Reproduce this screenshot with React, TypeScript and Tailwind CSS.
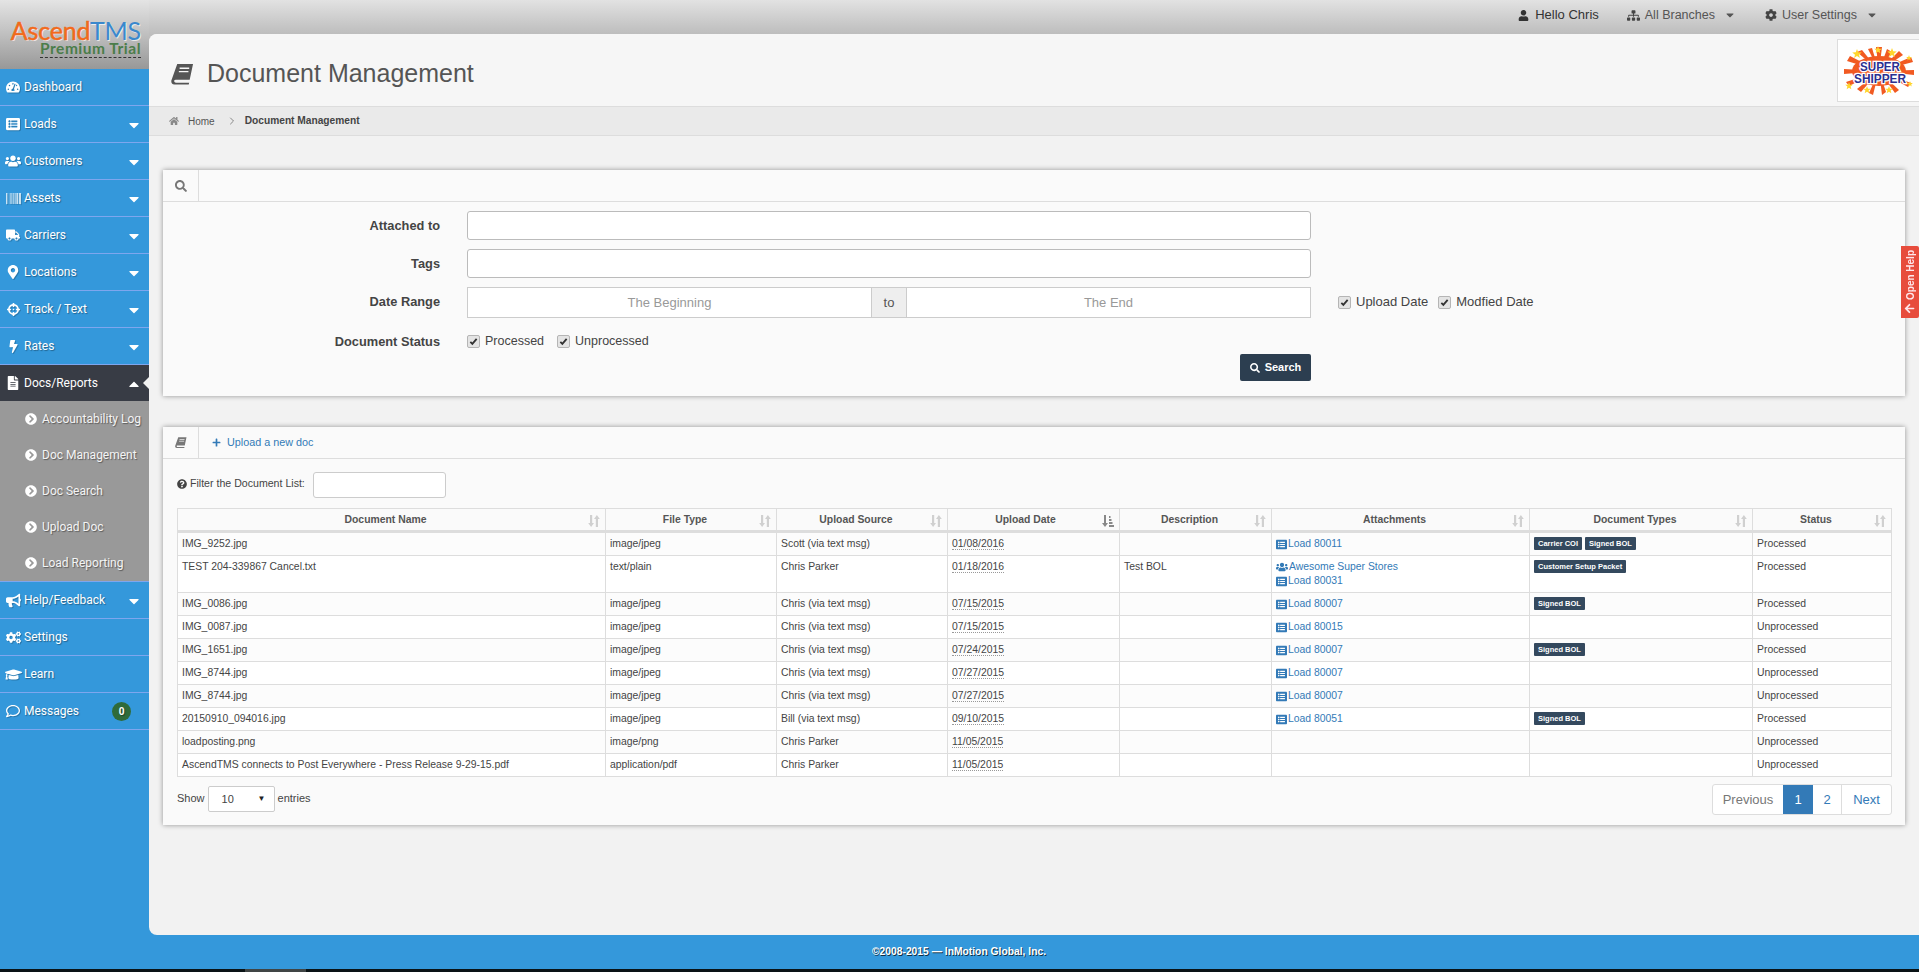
import type { ReactNode } from "react";
import { ChevronRight } from "lucide-react";
import {
  FaBarcode,
  FaBolt,
  FaBullhorn,
  FaCaretDown,
  FaCaretUp,
  FaChevronCircleRight,
  FaCog,
  FaCogs,
  FaCrosshairs,
  FaFileAlt,
  FaGraduationCap,
  FaHome,
  FaListAlt,
  FaMapMarkerAlt,
  FaPlus,
  FaQuestionCircle,
  FaRegComment,
  FaSearch,
  FaSitemap,
  FaTachometerAlt,
  FaTruck,
  FaUser,
  FaUsers,
  FaArrowUp,
} from "react-icons/fa";

const navTop = [
  { label: "Dashboard", icon: <FaTachometerAlt size={14} /> },
  { label: "Loads", icon: <FaListAlt size={14} />, caret: true },
  { label: "Customers", icon: <FaUsers size={16} />, caret: true },
  { label: "Assets", icon: <FaBarcode size={15} />, caret: true },
  { label: "Carriers", icon: <FaTruck size={14} />, caret: true },
  { label: "Locations", icon: <FaMapMarkerAlt size={14} />, caret: true },
  { label: "Track / Text", icon: <FaCrosshairs size={13} />, caret: true },
  { label: "Rates", icon: <FaBolt size={13} />, caret: true },
];

const navSub = ["Accountability Log", "Doc Management", "Doc Search", "Upload Doc", "Load Reporting"];

const navBottom = [
  { label: "Help/Feedback", icon: <FaBullhorn size={15} />, caret: true },
  { label: "Settings", icon: <FaCogs size={15} /> },
  { label: "Learn", icon: <FaGraduationCap size={17} /> },
  { label: "Messages", icon: <FaRegComment size={14} />, badge: "0" },
];

type Row = {
  name: string;
  type: string;
  source: string;
  date: string;
  desc?: string;
  links?: { text: string; customer?: boolean }[];
  tags?: string[];
  status: string;
};

const rows: Row[] = [
  { name: "IMG_9252.jpg", type: "image/jpeg", source: "Scott (via text msg)", date: "01/08/2016", links: [{ text: "Load 80011" }], tags: ["Carrier COI", "Signed BOL"], status: "Processed" },
  { name: "TEST 204-339867 Cancel.txt", type: "text/plain", source: "Chris Parker", date: "01/18/2016", desc: "Test BOL", links: [{ text: "Awesome Super Stores", customer: true }, { text: "Load 80031" }], tags: ["Customer Setup Packet"], status: "Processed" },
  { name: "IMG_0086.jpg", type: "image/jpeg", source: "Chris (via text msg)", date: "07/15/2015", links: [{ text: "Load 80007" }], tags: ["Signed BOL"], status: "Processed" },
  { name: "IMG_0087.jpg", type: "image/jpeg", source: "Chris (via text msg)", date: "07/15/2015", links: [{ text: "Load 80015" }], status: "Unprocessed" },
  { name: "IMG_1651.jpg", type: "image/jpeg", source: "Chris (via text msg)", date: "07/24/2015", links: [{ text: "Load 80007" }], tags: ["Signed BOL"], status: "Processed" },
  { name: "IMG_8744.jpg", type: "image/jpeg", source: "Chris (via text msg)", date: "07/27/2015", links: [{ text: "Load 80007" }], status: "Unprocessed" },
  { name: "IMG_8744.jpg", type: "image/jpeg", source: "Chris (via text msg)", date: "07/27/2015", links: [{ text: "Load 80007" }], status: "Unprocessed" },
  { name: "20150910_094016.jpg", type: "image/jpeg", source: "Bill (via text msg)", date: "09/10/2015", links: [{ text: "Load 80051" }], tags: ["Signed BOL"], status: "Processed" },
  { name: "loadposting.png", type: "image/png", source: "Chris Parker", date: "11/05/2015", status: "Unprocessed" },
  { name: "AscendTMS connects to Post Everywhere - Press Release 9-29-15.pdf", type: "application/pdf", source: "Chris Parker", date: "11/05/2015", status: "Unprocessed" },
];

const columns = [
  { label: "Document Name", width: "w-[428px]" },
  { label: "File Type", width: "w-[171px]" },
  { label: "Upload Source", width: "w-[171px]" },
  { label: "Upload Date", width: "w-[172px]", active: true },
  { label: "Description", width: "w-[152px]" },
  { label: "Attachments", width: "w-[258px]" },
  { label: "Document Types", width: "w-[223px]" },
  { label: "Status", width: "w-[139px]" },
];

function BookIcon({ className }: { className: string }) {
  return (
    <svg viewBox="0 0 24 22" className={className} fill="currentColor">
      <path d="M6.5.5H23L19.5 17H5C3.500 17 3 18 3.500 19c.3.7 1 1 2 1H19l-.5 2h-15C1.500 22 0 20.500.3 18Z" />
      <path d="M9 5h10M8.200 8.500h10" stroke="#f6f6f6" strokeWidth="1.400" fill="none" />
    </svg>
  );
}

function SortIcon({ active }: { active?: boolean }) {
  if (active) {
    return (
      <svg viewBox="0 0 12 12" className="h-3 w-3 shrink-0 text-[#888]" fill="currentColor">
        <path d="M2 0h2v8h2L3 12 0 8h2Z" />
        <path d="M7 1h1.500v2H7ZM7 4h2.500v2H7ZM7 7h3.500v2H7ZM7 10h5v2H7Z" />
      </svg>
    );
  }
  return (
    <svg viewBox="0 0 12 12" className="h-3 w-3 shrink-0 text-[#d0d0d0]" fill="currentColor">
      <path d="M2 0h2.200v8H6L3.100 12 .2 8H2Z" />
      <path d="M7.800 12H10V4h1.800L8.900 0 6 4h1.800Z" />
    </svg>
  );
}

function Check({ label }: { label: string }) {
  return (
    <span className="flex items-center gap-[5px]">
      <span className="flex h-[13px] w-[13px] items-center justify-center rounded-[2px] border border-[#b5b5b5] bg-[#e4e4e4]">
        <svg viewBox="0 0 10 10" className="h-[9px] w-[9px]" fill="none" stroke="#333" strokeWidth="2">
          <path d="M1.500 5.500l2.200 2.200L8.500 2" />
        </svg>
      </span>
      {label}
    </span>
  );
}

function NavItem({ label, icon, caret, badge }: { label: string; icon: ReactNode; caret?: boolean; badge?: string }) {
  return (
    <div className="flex h-[37px] items-center border-b border-[#7ea6ee] text-white [text-shadow:1px_1px_1px_rgba(0,0,0,0.35)]">
      <span className="flex w-[24px] shrink-0 justify-center pl-[2px] drop-shadow-[1px_1px_0_rgba(0,0,0,0.2)]">{icon}</span>
      <span className="flex-1 text-[12px]">{label}</span>
      {caret && <FaCaretDown size={16} className="mr-[7px] mt-[2px]" />}
      {badge && (
        <span className="mr-[18px] flex h-[19px] w-[19px] items-center justify-center rounded-full bg-[#2f6b3a] text-[10px] font-bold">
          {badge}
        </span>
      )}
    </div>
  );
}

function Sidebar() {
  return (
    <aside className="flex w-[149px] shrink-0 flex-col bg-[#3498db] font-['Roboto',sans-serif]">
      <div className="flex h-[69px] flex-col items-end justify-end bg-gradient-to-b from-[#e4e4e4] via-[#bfbfbf] to-[#989898] pb-[11px] pr-[8px]">
        <div className="mb-[-3px] text-[25px] leading-[24px] tracking-[-0.2px] font-['Lato',sans-serif] [text-shadow:1px_1px_0_rgba(255,255,255,0.7)]">
          <span className="text-[#f26a1b] [-webkit-text-stroke:0.5px_#f26a1b]">Ascend</span>
          <span className="text-[#3a88cc]">TMS</span>
        </div>
        <div className="border-b border-dashed border-[#333] text-[15.5px] font-bold leading-[18px] tracking-[0.5px] text-[#4b7d4a] font-['Lato',sans-serif]">
          Premium Trial
        </div>
      </div>
      {navTop.map((item) => (
        <NavItem key={item.label} {...item} />
      ))}
      <div className="relative flex h-[36px] items-center bg-[#383c45] text-white">
        <span className="flex w-[24px] shrink-0 justify-center pl-[2px]">
          <FaFileAlt size={14} />
        </span>
        <span className="flex-1 text-[12px]">Docs/Reports</span>
        <FaCaretUp size={16} className="mr-[7px] mt-[2px]" />
        <span className="absolute right-0 top-[12px] h-0 w-0 border-y-[6px] border-r-[6px] border-y-transparent border-r-[#f2f2f2]" />
      </div>
      <div className="bg-[#999999] text-[#f4f4f4] [text-shadow:1px_1px_1px_rgba(0,0,0,0.4)]">
        {navSub.map((label) => (
          <div key={label} className="flex h-[36px] items-center gap-[5px] pl-[25px] text-[12px]">
            <FaChevronCircleRight size={12} className="shrink-0 text-white" />
            <span className="whitespace-nowrap">{label}</span>
          </div>
        ))}
      </div>
      <div className="border-t border-[#7ea6ee]">
        {navBottom.map((item) => (
          <NavItem key={item.label} {...item} />
        ))}
      </div>
    </aside>
  );
}

function TopBar() {
  return (
    <header className="flex h-[34px] items-center justify-end bg-gradient-to-b from-[#e2e2e2] to-[#bdbdbd] pb-[4px] pr-[41px] text-[12.5px] text-[#555]">
      <span className="flex items-center gap-[6px] text-[13px] text-[#333]">
        <FaUser size={11} />
        Hello Chris
      </span>
      <span className="ml-[28px] flex items-center gap-[5px]">
        <FaSitemap size={13} className="text-[#444]" />
        All Branches
        <FaCaretDown size={12} className="ml-[4px]" />
      </span>
      <span className="ml-[29px] flex items-center gap-[5px]">
        <FaCog size={12} className="text-[#444]" />
        User Settings
        <FaCaretDown size={12} className="ml-[4px]" />
      </span>
    </header>
  );
}

// rays and stars of the Super Shipper badge
const rays = [
  "36,25 33,1 39,1",
  "36,25 44,3 49,6",
  "36,25 56,5 60,9",
  "36,25 68,11 70,16",
  "36,25 71,24 71,29",
  "36,25 68,37 65,41",
  "36,25 56,44 52,47",
  "36,25 43,46 39,49",
  "36,25 30,49 26,47",
  "36,25 18,46 14,43",
  "36,25 6,40 3,36",
  "36,25 1,28 1,23",
  "36,25 4,15 7,10",
  "36,25 14,6 19,4",
  "36,25 25,3 29,2",
];

function Star({ x, y, r }: { x: number; y: number; r: number }) {
  const points = Array.from({ length: 10 }, (_, i) => {
    const a = (Math.PI / 5) * i - Math.PI / 2;
    const d = i % 2 === 0 ? r : r * 0.42;
    return `${x + d * Math.cos(a)},${y + d * Math.sin(a)}`;
  }).join(" ");
  return <polygon points={points} fill="#ffd62e" />;
}

function SuperShipper() {
  return (
    <svg viewBox="0 0 72 50" className="h-[50px] w-[72px]">
      {rays.map((p) => (
        <polygon key={p} points={p} fill="#f15a22" />
      ))}
      <ellipse cx="36" cy="25" rx="27" ry="15" fill="#f15a22" />
      <Star x={14} y={8} r={5} />
      <Star x={35} y={4} r={4} />
      <Star x={49} y={7} r={5} />
      <Star x={66} y={12} r={3} />
      <Star x={6} y={40} r={4} />
      <Star x={24} y={44} r={4} />
      <Star x={46} y={44} r={4} />
      <Star x={67} y={38} r={3} />
      <text x="37" y="25" textAnchor="middle" fontSize="13" fontWeight="700" fill="#2b3092" stroke="#fff" strokeWidth="2.500" paintOrder="stroke" fontFamily="'Liberation Sans', sans-serif" textLength="40" lengthAdjust="spacingAndGlyphs">SUPER</text>
      <text x="37" y="37" textAnchor="middle" fontSize="13" fontWeight="700" fill="#2b3092" stroke="#fff" strokeWidth="2.500" paintOrder="stroke" fontFamily="'Liberation Sans', sans-serif" textLength="52" lengthAdjust="spacingAndGlyphs">SHIPPER</text>
    </svg>
  );
}

function PanelHead({ icon, children }: { icon: ReactNode; children?: ReactNode }) {
  return (
    <div className="flex h-[32px] items-stretch border-b border-[#ddd]">
      <div className="flex w-[36px] items-center justify-center border-r border-[#ddd] text-[#777]">{icon}</div>
      {children}
    </div>
  );
}

function FieldRow({ label, children, className }: { label: string; children: ReactNode; className: string }) {
  return (
    <div className={`flex items-center ${className}`}>
      <label className="w-[277px] text-right text-[12.8px] font-bold text-[#444]">{label}</label>
      <div className="ml-[27px] flex flex-1 items-center">{children}</div>
    </div>
  );
}

function SearchPanel() {
  const inputClass = "h-[29px] w-[844px] rounded-[3px] border border-[#bbb] bg-white";
  return (
    <section className="bg-[#fafafa] shadow-[0_0_5px_rgba(0,0,0,0.4)]">
      <PanelHead icon={<FaSearch size={12} />} />
      <div className="flex h-[194px] flex-col pt-[9px] text-[13px] text-[#444]">
        <FieldRow label="Attached to" className="mb-[9px]">
          <input className={inputClass} />
        </FieldRow>
        <FieldRow label="Tags" className="mb-[9px]">
          <input className={inputClass} />
        </FieldRow>
        <FieldRow label="Date Range" className="mb-[14px] [&>label]:pb-[2px]">
          <div className="flex h-[31px] w-[844px]">
            <input placeholder="The Beginning" className="w-[405px] border border-[#ccc] bg-white text-center text-[13px] placeholder:text-[#999]" />
            <span className="flex w-[34px] items-center justify-center border-y border-[#ccc] bg-[#eee] text-[#555]">to</span>
            <input placeholder="The End" className="w-[405px] border border-[#ccc] bg-white text-center text-[13px] placeholder:text-[#999]" />
          </div>
          <div className="ml-[27px] flex gap-[10px] pb-[1px]">
            <Check label="Upload Date" />
            <Check label="Modfied Date" />
          </div>
        </FieldRow>
        <FieldRow label="Document Status" className="mb-[3px]">
          <div className="flex gap-[13px] text-[12.5px]">
            <Check label="Processed" />
            <Check label="Unprocessed" />
          </div>
        </FieldRow>
        <div className="flex justify-start pl-[1077px]">
          <button className="flex h-[27px] w-[71px] items-center justify-center gap-[5px] rounded-[2px] bg-[#2c3e50] text-[11px] font-bold text-white">
            <FaSearch size={10} />
            Search
          </button>
        </div>
      </div>
    </section>
  );
}

function DocumentTable() {
  const cell = "border border-[#ddd] px-[4px] py-[4px] align-top";
  return (
    <table className="w-[1714px] table-fixed border-collapse text-[10.4px] leading-[14px] text-[#444]">
      <colgroup>
        {columns.map((c) => (
          <col key={c.label} className={c.width} />
        ))}
      </colgroup>
      <thead>
        <tr>
          {columns.map((c) => (
            <th key={c.label} className="h-[23px] border border-b-[3px] border-[#ddd] px-[5px] font-bold text-[#555]">
              <div className="relative text-center">
                <span className={c.active ? "pr-[16px]" : "pr-[12px]"}>{c.label}</span>
                <span className="absolute right-0 top-[2px]">
                  <SortIcon active={c.active} />
                </span>
              </div>
            </th>
          ))}
        </tr>
      </thead>
      <tbody>
        {rows.map((r, i) => (
          <tr key={i} className={i % 2 === 0 ? "bg-[#fcfcfc]" : "bg-white"}>
            <td className={`h-[23px] ${cell}`}>{r.name}</td>
            <td className={cell}>{r.type}</td>
            <td className={cell}>{r.source}</td>
            <td className={cell}>
              <span className="border-b border-dotted border-[#999]">{r.date}</span>
            </td>
            <td className={cell}>{r.desc}</td>
            <td className={`${cell} text-[#337ab7]`}>
              {r.links?.map((l) => (
                <div key={l.text} className="flex h-[14px] items-center gap-[1px]">
                  {l.customer ? <FaUsers size={12} /> : <FaListAlt size={11} />}
                  <span>{l.text}</span>
                </div>
              ))}
            </td>
            <td className={cell}>
              <div className="flex gap-[3px]">
                {r.tags?.map((t) => (
                  <span key={t} className="flex h-[13px] items-center whitespace-nowrap rounded-[1px] bg-[#34495e] px-[4px] text-[7.500px] font-bold text-white">
                    {t}
                  </span>
                ))}
              </div>
            </td>
            <td className={cell}>{r.status}</td>
          </tr>
        ))}
      </tbody>
    </table>
  );
}

function DocumentsPanel() {
  return (
    <section className="mt-[31px] bg-[#fafafa] pb-[10px] shadow-[0_0_5px_rgba(0,0,0,0.4)]">
      <PanelHead icon={<BookIcon className="h-[11px] w-[12px]" />}>
        <span className="ml-[13px] flex items-center gap-[6px] text-[10.800px] text-[#337ab7]">
          <FaPlus size={9} />
          Upload a new doc
        </span>
      </PanelHead>
      <div className="pl-[14px] pr-[13px]">
        <div className="mt-[13px] flex items-center text-[10.600px] text-[#444]">
          <FaQuestionCircle size={10} className="mr-[3px] mt-[-3px]" />
          <span className="mt-[-3px]">Filter the Document List:</span>
          <input className="ml-[8px] h-[26px] w-[133px] rounded-[3px] border border-[#ccc] bg-white" />
        </div>
        <div className="mt-[10px]">
          <DocumentTable />
        </div>
        <div className="mt-[7px] flex items-start justify-between text-[11px] text-[#444]">
          <div className="mt-[2px] flex items-center gap-[3px]">
            <span className="mt-[-1px]">Show</span>
            <span className="flex h-[26px] w-[67px] items-center justify-between rounded-[2px] border border-[#ccc] bg-white pl-[13px] pr-[8px] text-[11px]">
              10
              <span className="text-[8px] text-[#222]">▼</span>
            </span>
            <span className="mt-[-1px]">entries</span>
          </div>
          <div className="flex h-[31px] overflow-hidden rounded-[3px] border border-[#ddd] bg-white text-[13px] text-[#337ab7]">
            <span className="flex w-[70px] items-center justify-center text-[#777]">Previous</span>
            <span className="flex w-[30px] items-center justify-center bg-[#337ab7] text-white">1</span>
            <span className="flex w-[29px] items-center justify-center border-r border-[#ddd]">2</span>
            <span className="flex w-[49px] items-center justify-center">Next</span>
          </div>
        </div>
      </div>
    </section>
  );
}

function Content() {
  return (
    <div className="relative flex-1 overflow-hidden bg-[linear-gradient(#bdbdbd_50%,#3498db_50%)]">
      <main className="h-full overflow-hidden rounded-l-[8px] bg-[#f2f2f2]">
        <div className="flex h-[73px] items-center justify-between border-b border-[#ddd] bg-[#f6f6f6] pl-[22px]">
          <div className="mt-[7px] flex items-center gap-[13px] text-[#555]">
            <BookIcon className="h-[22px] w-[23px]" />
            <h1 className="text-[25px] font-normal">Document Management</h1>
          </div>
          <div className="mt-[1px] flex h-[63px] w-[82px] items-center justify-center border border-r-0 border-[#ddd] bg-white">
            <SuperShipper />
          </div>
        </div>
        <div className="flex h-[29px] items-center border-b border-[#ddd] bg-[#eaeaea] pl-[20px] text-[10.200px] text-[#555]">
          <FaHome size={10} className="text-[#888]" />
          <span className="ml-[9px] text-[10px]">Home</span>
          <ChevronRight size={12} strokeWidth={1.5} className="ml-[11px] text-[#666]" />
          <span className="ml-[7px] font-bold text-[#444]">Document Management</span>
        </div>
        <div className="px-[14px] pt-[34px]">
          <SearchPanel />
          <DocumentsPanel />
        </div>
      </main>
      <div className="absolute right-0 top-[212px] flex h-[72px] w-[18px] items-center justify-center gap-[3px] rounded-l-[2px] bg-[#e74c3c] text-[10px] font-bold text-[#ffe6ea] [writing-mode:vertical-rl] rotate-180">
        <FaArrowUp size={11} className="rotate-90" />
        Open Help
      </div>
    </div>
  );
}

export default function App() {
  return (
    <div className="flex h-[972px] w-full flex-col overflow-hidden bg-[#3498db] font-['Liberation_Sans',Arial,sans-serif]">
      <div className="flex min-h-0 flex-1">
        <Sidebar />
        <div className="flex min-w-0 flex-1 flex-col">
          <TopBar />
          <Content />
          <footer className="flex h-[34px] shrink-0 items-center justify-center pr-[150px] text-[10.300px] font-bold text-white [text-shadow:1px_1px_0_rgba(0,0,0,0.7)]">
            ©2008-2015 — InMotion Global, Inc.
          </footer>
        </div>
      </div>
      <div className="h-[3px] shrink-0 bg-[#0a1316]">
        <div className="ml-[245px] h-full w-[61px] bg-[#404545]" />
      </div>
    </div>
  );
}
